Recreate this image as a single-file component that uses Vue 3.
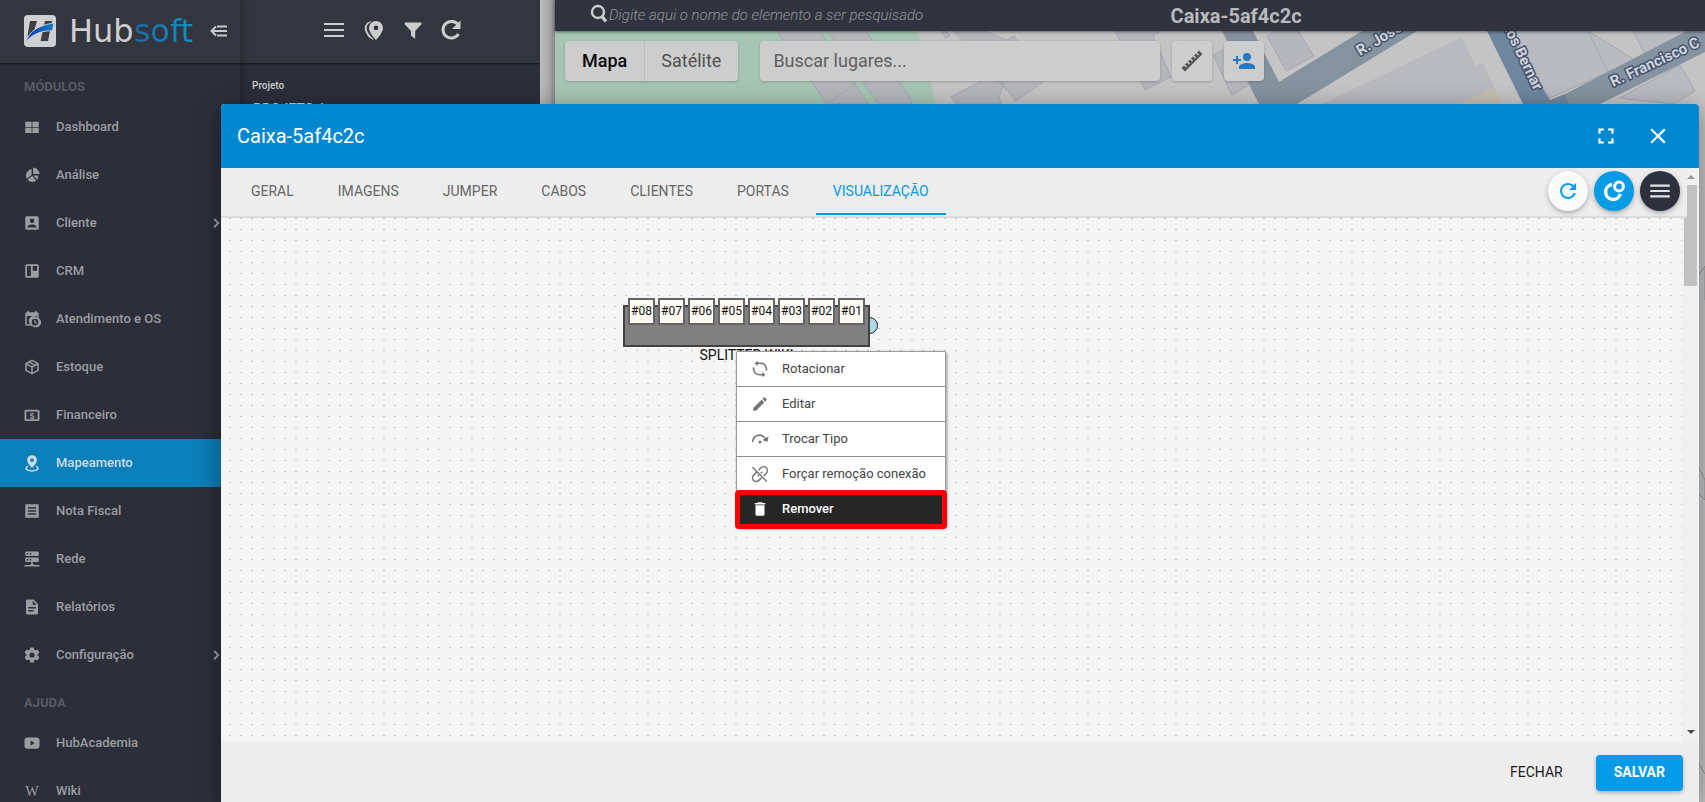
<script setup>
const modules = [
  { label: 'Dashboard', icon: 'grid' },
  { label: 'Análise', icon: 'pie' },
  { label: 'Cliente', icon: 'account', more: true },
  { label: 'CRM', icon: 'board' },
  { label: 'Atendimento e OS', icon: 'calendar' },
  { label: 'Estoque', icon: 'box' },
  { label: 'Financeiro', icon: 'money', glyph: '$' },
  { label: 'Mapeamento', icon: 'pin', active: true },
  { label: 'Nota Fiscal', icon: 'receipt' },
  { label: 'Rede', icon: 'server' },
  { label: 'Relatórios', icon: 'file' },
  { label: 'Configuração', icon: 'cog', more: true },
]
const help = [
  { label: 'HubAcademia', icon: 'video' },
  { label: 'Wiki', icon: 'none', glyph: 'W' },
]
const sections = [
  { title: 'MÓDULOS', items: modules },
  { title: 'AJUDA', items: help },
]
const tabs = ['GERAL', 'IMAGENS', 'JUMPER', 'CABOS', 'CLIENTES', 'PORTAS', 'VISUALIZAÇÃO']
const ports = ['#08', '#07', '#06', '#05', '#04', '#03', '#02', '#01']
const actions = [
  { label: 'Rotacionar', icon: 'rotate' },
  { label: 'Editar', icon: 'pencil' },
  { label: 'Trocar Tipo', icon: 'swap' },
  { label: 'Forçar remoção conexão', icon: 'unlink' },
  { label: 'Remover', icon: 'trash', active: true },
]
const icons = {
  none: '',
  grid: 'M3 5h8.5v7H3zM12.5 5H21v7h-8.5zM3 13h8.5v7H3zM12.5 13H21v7h-8.5z',
  pie: 'M13.5 2A9 9 0 0 1 22 10.500H13.500ZM11.500 4V12L5 17A9 9 0 0 1 11.500 4ZM12.500 13L17.500 19.500A9 9 0 0 1 6 18.200ZM14 12.500H20.500A9 9 0 0 1 18.700 18.400Z',
  account: 'M6,17C6,15 10,13.9 12,13.9C14,13.9 18,15 18,17V18H6M15,9A3,3 0 0,1 12,12A3,3 0 0,1 9,9A3,3 0 0,1 12,6A3,3 0 0,1 15,9M3,5V19A2,2 0 0,0 5,21H19A2,2 0 0,0 21,19V5A2,2 0 0,0 19,3H5C3.89,3 3,3.9 3,5Z',
  board: 'M5 3h14a2 2 0 0 1 2 2v14a2 2 0 0 1-2 2H5a2 2 0 0 1-2-2V5a2 2 0 0 1 2-2zM5.300 5.300v13.400h5.200V5.300zM13 5.300v6.200h5.700V5.300z',
  calendar: 'M6 1h2v2h8V1h2v2h1a2 2 0 0 1 2 2v5.500a6.500 6.500 0 0 1-7.500 11.500A6 6 0 0 1 11 21H5a2 2 0 0 1-2-2V5a2 2 0 0 1 2-2h1zM5 8v11h4.600A6.500 6.500 0 0 1 19 10V8zM16 11.500a4.500 4.500 0 1 0 0 9 4.500 4.500 0 0 0 0-9zM15 13h1.500v2.800l2.300 1.400-.8 1.200-3-1.800z',
  box: 'M21,16.5C21,16.88 20.79,17.21 20.47,17.38L12.57,21.82C12.41,21.94 12.21,22 12,22C11.79,22 11.59,21.94 11.43,21.82L3.53,17.38C3.21,17.21 3,16.88 3,16.5V7.500C3,7.12 3.21,6.79 3.53,6.62L11.43,2.18C11.59,2.06 11.79,2 12,2C12.21,2 12.41,2.06 12.57,2.18L20.47,6.62C20.79,6.79 21,7.12 21,7.5V16.5M12,4.15L10.11,5.22L16,8.61L17.96,7.5L12,4.15M6.04,7.5L12,10.85L13.96,9.75L8.08,6.35L6.04,7.5M5,15.91L11,19.29V12.58L5,9.21V15.91M19,15.91V9.21L13,12.58V19.29L19,15.91Z',
  money: 'M4 5h16a2 2 0 0 1 2 2v11a2 2 0 0 1-2 2H4a2 2 0 0 1-2-2V7a2 2 0 0 1 2-2zM4.500 7.200v10.600h15V7.200z',
  pin: 'M12 1.500A6.500 6.500 0 0 1 18.500 8C18.500 12.500 12 18.500 12 18.500S5.500 12.500 5.500 8A6.500 6.500 0 0 1 12 1.500M12 5.500A2.500 2.500 0 1 0 12 10.500 2.500 2.500 0 0 0 12 5.500M21 19C21 21.500 17 23.500 12 23.500S3 21.500 3 19C3 17.600 4.300 16.300 6.300 15.500L7.300 17C6 17.500 5.200 18.200 5.200 19 5.200 20.400 8.200 21.500 12 21.500S18.800 20.400 18.800 19C18.800 18.200 18 17.500 16.700 17L17.700 15.500C19.700 16.300 21 17.600 21 19Z',
  receipt: 'M3 3h18v18H3zM6.500 7v2h11V7zM6.500 11v2h11v-2zM6.500 15v2h11v-2z',
  server: 'M4 2h16a1 1 0 0 1 1 1v4a1 1 0 0 1-1 1H4a1 1 0 0 1-1-1V3a1 1 0 0 1 1-1zM5 4v2h2V4zM9 4v2h2V4zM4 10h16a1 1 0 0 1 1 1v4a1 1 0 0 1-1 1h-7v3h1l1 1h7v2H2v-2h7l1-1h1v-3H4a1 1 0 0 1-1-1v-4a1 1 0 0 1 1-1zM5 12v2h2v-2zM9 12v2h2v-2z',
  file: 'M5 2h9l6 6v12a2 2 0 0 1-2 2H6a2 2 0 0 1-2-2V4a2 2 0 0 1 1-2zM13 4v5h5zM7 12v2h10v-2zM7 16v2h7v-2z',
  cog: 'M12,15.5A3.5,3.5 0 0,1 8.5,12A3.5,3.5 0 0,1 12,8.5A3.5,3.5 0 0,1 15.5,12A3.5,3.5 0 0,1 12,15.5M19.43,12.97C19.47,12.65 19.5,12.33 19.5,12C19.5,11.67 19.47,11.34 19.43,11L21.54,9.37C21.73,9.22 21.78,8.95 21.66,8.73L19.66,5.27C19.54,5.05 19.27,4.96 19.05,5.05L16.56,6.05C16.04,5.66 15.5,5.32 14.87,5.07L14.5,2.42C14.46,2.18 14.25,2 14,2H10C9.75,2 9.54,2.18 9.5,2.42L9.13,5.07C8.5,5.32 7.96,5.66 7.44,6.05L4.95,5.05C4.73,4.96 4.46,5.05 4.34,5.27L2.34,8.73C2.21,8.95 2.27,9.22 2.46,9.37L4.57,11C4.53,11.34 4.5,11.67 4.5,12C4.5,12.33 4.53,12.65 4.57,12.97L2.46,14.63C2.27,14.78 2.21,15.05 2.34,15.27L4.34,18.73C4.46,18.95 4.73,19.03 4.95,18.95L7.44,17.94C7.96,18.34 8.5,18.68 9.13,18.93L9.5,21.58C9.54,21.82 9.75,22 10,22H14C14.25,22 14.46,21.82 14.5,21.58L14.87,18.93C15.5,18.67 16.04,18.34 16.56,17.94L19.05,18.95C19.27,19.03 19.54,18.95 19.66,18.73L21.66,15.27C21.78,15.05 21.73,14.78 21.54,14.63L19.43,12.97Z',
  video: 'M6 4.500h12a4 4 0 0 1 4 4v7a4 4 0 0 1-4 4H6a4 4 0 0 1-4-4v-7a4 4 0 0 1 4-4zM10 8.500v7l5.500-3.500z',
  chevron: 'M8.600 16.600L13.200 12 8.600 7.400 10.500 5.500l6.500 6.500-6.500 6.500z',
  rotate: 'M9 1L9 3.200H13A9 9 0 0 1 21.500 14H19.300A7 7 0 0 0 13 5.200H9V8L4.800 4.500ZM15 23V20.800H11A9 9 0 0 1 2.500 10H4.700A7 7 0 0 0 11 18.800H15V16L19.200 19.500Z',
  pencil: 'M20.71,7.04C21.1,6.65 21.1,6 20.71,5.63L18.37,3.29C18,2.9 17.35,2.9 16.96,3.29L15.12,5.12L18.87,8.87M3,17.25V21H6.75L17.81,9.93L14.06,6.18L3,17.25Z',
  swap: 'M12 14a2 2 0 1 1 0 4 2 2 0 0 1 0-4M23.500 8.500L22 15.500 15.500 13.500 18 11.800A8 8 0 0 0 3.300 16H1.200A10 10 0 0 1 19.700 10.600Z',
  trash: 'M19,4H15.5L14.5,3H9.5L8.5,4H5V6H19M6,19A2,2 0 0,0 8,21H16A2,2 0 0,0 18,19V7H6V19Z',
  refresh: 'M17.65,6.35C16.2,4.9 14.21,4 12,4A8,8 0 0,0 4,12A8,8 0 0,0 12,20C15.73,20 18.84,17.45 19.73,14H17.65C16.83,16.33 14.61,18 12,18A6,6 0 0,1 6,12A6,6 0 0,1 12,6C13.66,6 15.14,6.69 16.22,7.78L13,11H20V4L17.65,6.35Z',
  menu: 'M3 6H21V8H3zM3 11H21V13H3zM3 16H21V18H3z',
  full: 'M5 5h5v2H7v3H5zM14 5h5v5h-2V7h-3zM17 14h2v5h-5v-2h3zM10 17v2H5v-5h2v3z',
  close: 'M19,6.41L17.59,5L12,10.59L6.41,5L5,6.41L10.59,12L5,17.59L6.41,19L12,13.41L17.59,19L19,17.59L13.41,12L19,6.41Z',
  addPerson: 'M15,14C12.330,14 7,15.330 7,18V20H23V18C23,15.330 17.670,14 15,14M6,10V7H4V10H1V12H4V15H6V12H9V10M15,12A4,4 0 0,0 19,8A4,4 0 0,0 15,4A4,4 0 0,0 11,8A4,4 0 0,0 15,12Z',
  funnel: 'M2 3h20v2l-7.500 8v9.500l-5-4V13L2 5z',
}
</script>

<template>
  <div class="app">
    <aside class="sidebar">
      <header class="brand">
        <svg class="logo" viewBox="0 0 32 32" aria-hidden="true">
          <defs>
            <linearGradient id="swoosh" x1="0" x2="1">
              <stop offset="0" stop-color="#0b36c9" />
              <stop offset="1" stop-color="#0b7fc0" />
            </linearGradient>
          </defs>
          <rect width="32" height="32" rx="4" fill="#cfd0d1" />
          <path d="M6 6h7l-4.500 15H3.500zM21 6h7l-4 20H16.500z" fill="#3e3e40" />
          <path d="M2 26.500C5 18 11 11 30 8L28.500 16C20 15 9 18.500 2 26.500z" fill="url(#swoosh)" stroke="#cfd0d1" />
        </svg>
        <span class="name">Hub<span>soft</span></span>
        <button class="bare fold" aria-label="Recolher menu">
          <svg viewBox="0 0 18 12" width="18" height="12"><path d="M7 1.500H17M2 6H17M7 10.500H17M6 1.500L1.500 6L6 10.500" fill="none" stroke="currentColor" stroke-width="2" /></svg>
        </button>
      </header>
      <nav>
        <template v-for="s in sections" :key="s.title">
          <h2>{{ s.title }}</h2>
          <a v-for="i in s.items" :key="i.label" href="#" class="item" :class="{ active: i.active }">
            <svg viewBox="0 0 24 24" width="18" height="18" aria-hidden="true">
              <path :d="icons[i.icon]" fill="currentColor" fill-rule="evenodd" />
              <text v-if="i.glyph" x="12" :y="i.glyph === 'W' ? 19 : 17" class="glyph" :class="{ serif: i.glyph === 'W' }">{{ i.glyph }}</text>
            </svg>
            <span>{{ i.label }}</span>
            <svg v-if="i.more" class="more" viewBox="0 0 24 24" width="18" height="18"><path :d="icons.chevron" fill="currentColor" /></svg>
          </a>
        </template>
      </nav>
    </aside>

    <section class="project">
      <header>
        <button class="bare" aria-label="Menu"><svg viewBox="0 0 28 28"><path d="M4 8h20M4 14h20M4 20h20" stroke="currentColor" stroke-width="2" /></svg></button>
        <button class="bare" aria-label="Locais"><svg viewBox="0 0 28 28"><path d="M17 5a7 7 0 0 1 7 7c0 5-7 12-7 12s-7-7-7-12a7 7 0 0 1 7-7zM17 9.500a2.400 2.400 0 1 0 0 4.800 2.400 2.400 0 0 0 0-4.800z" fill="currentColor" fill-rule="evenodd" /><path d="M12 5.500C5 8.500 5 15 14 23.500M9.500 6.500C5 10 5 15 11.500 22" fill="none" stroke="currentColor" stroke-width="1.300" /></svg></button>
        <button class="bare" aria-label="Filtrar"><svg viewBox="0 0 28 28"><path :d="icons.funnel" transform="translate(5 4) scale(.84)" fill="currentColor" /></svg></button>
        <button class="bare" aria-label="Atualizar"><svg viewBox="0 0 28 28"><path d="M21.500 9.500A8.300 8.300 0 1 0 21.500 18" fill="none" stroke="currentColor" stroke-width="3" /><path d="M23.500 4.500V13H15z" fill="currentColor" /></svg></button>
      </header>
      <p class="caption">Projeto</p>
      <p class="value">PROJETO 1</p>
    </section>

    <div class="splitbar"></div>

    <main class="map">
      <header>
        <label class="find">
          <svg viewBox="0 0 18 20" width="18" height="20"><circle cx="8" cy="8" r="6" fill="none" stroke="currentColor" stroke-width="2.400" /><path d="M11.500 12L16 17.500" stroke="currentColor" stroke-width="3.400" /></svg>
          <input type="text" placeholder="Digite aqui o nome do elemento a ser pesquisado" aria-label="Pesquisar elemento" />
        </label>
        <h1>Caixa-5af4c2c</h1>
        <span></span>
      </header>
      <div class="ground">
        <svg class="streets" viewBox="555 31 1150 771" width="1150" height="771" aria-hidden="true">
          <rect x="555" y="31" width="1150" height="771" fill="#c4c4c4" />
          <path d="M555 31H918L936 104H555z" fill="#a7c5b4" />
          <g fill="#b5b6bb" stroke="#a5a7b2">
            <path d="M777 31H820L868 104H827zM828 31H866L912 101V104H878zM856 83L827 104" />
            <path d="M941 31L946 38L950 36L947 31M954 31H985L1006 40L1014 36L1044 81L1016 101zM951 97L987 78L1004 83L999 97L1002 104H956z" />
            <path d="M1115 31H1161L1153 35L1171 77L1145 90zM1213 55L1225 49L1252 83L1232 95z" />
            <path d="M1267 36L1276 31H1298L1314 56L1286 71z" />
            <path d="M1322 104L1462 37L1475 66L1483 63L1494 87L1460 104z" fill="#b9babf" stroke="none" />
            <path d="M1507 31H1588L1635 60L1550 98zM1588 31L1608 72M1633 31L1645 54L1705 31zM1620 98L1680 65L1695 91L1673 104z" fill="#b9bbc1" />
          </g>
          <path d="M1460 104L1494 87L1501 104z" fill="#c5bfb0" />
          <path d="M1222 31H1253L1279 82L1362 31H1417L1297 104H1259zM1565 94L1687 31H1705V52L1600 104H1570z" fill="#8593a0" />
          <path d="M1487 31H1507L1550 100L1565 94L1570 104H1523z" fill="#6f869f" />
          <g class="street-names">
            <text transform="translate(1360 56) rotate(-31)">R. José</text>
            <text transform="translate(1613 87) rotate(-25)">R. Francisco C</text>
            <text transform="translate(1498 17) rotate(64)">arlos Bernar</text>
          </g>
          <path d="M1695 280L1705 266V300M1695 460L1705 480V500L1695 490M1698 762L1705 774" fill="none" stroke="#8f929a" />
        </svg>
        <div class="tools">
          <div class="kinds">
            <button class="on">Mapa</button><button>Satélite</button>
          </div>
          <input class="places" type="text" placeholder="Buscar lugares..." aria-label="Buscar lugares" />
          <button class="tool" aria-label="Régua">
            <svg viewBox="0 0 24 24" width="24" height="24"><path d="M1.500 19L4 16.500L6 18.500L7 17.500L5 15.500L7 13.500L9 15.500L10 14.500L8 12.500L10 10.500L12 12.500L13 11.500L11 9.500L13 7.500L15 9.500L16 8.500L14 6.500L16 4.500L18 6.500L19 5.500L17 3.500L19 1.500L22.500 5L5 22.500z" fill="#555" /></svg>
          </button>
          <button class="tool person" aria-label="Adicionar cliente">
            <svg viewBox="0 0 24 24" width="24" height="24"><path :d="icons.addPerson" fill="#2378c3" /></svg>
          </button>
        </div>
      </div>
    </main>

    <section class="dialog" role="dialog" aria-labelledby="dialog-title">
      <header class="title">
        <h2 id="dialog-title">Caixa-5af4c2c</h2>
        <button class="bare" aria-label="Tela cheia"><svg viewBox="0 0 24 24" width="26" height="26"><path :d="icons.full" fill="currentColor" /></svg></button>
        <button class="bare" aria-label="Fechar janela"><svg viewBox="0 0 24 24" width="26" height="26"><path :d="icons.close" fill="currentColor" /></svg></button>
      </header>
      <div class="body">
        <div class="content">
          <div class="tabbar">
            <div class="tabs" role="tablist">
              <button v-for="(t, n) in tabs" :key="t" role="tab" :aria-selected="n === 6">{{ t }}</button>
            </div>
            <div class="rounds">
              <button class="round light" aria-label="Recarregar"><svg viewBox="0 0 24 24" width="24" height="24"><path :d="icons.refresh" fill="#0a9df0" /></svg></button>
              <button class="round blue" aria-label="Conectar"><svg viewBox="0 0 24 24" width="24" height="24"><circle cx="17" cy="7.500" r="4.400" fill="none" stroke="#fff" stroke-width="3" /><path d="M10 5.500A7.500 7.500 0 1 0 18.300 15" fill="none" stroke="#fff" stroke-width="3.400" /></svg></button>
              <button class="round dark" aria-label="Opções"><svg viewBox="0 0 24 24" width="26" height="26"><path :d="icons.menu" fill="#e4e4e6" /></svg></button>
            </div>
          </div>
          <div class="canvas">
            <div class="device">
              <i class="plug"></i>
              <div class="case"></div>
              <div class="ports"><span v-for="p in ports" :key="p">{{ p }}</span></div>
              <p>SPLITTER WIKI</p>
            </div>
            <div class="menu" role="menu">
              <button v-for="a in actions" :key="a.label" role="menuitem" :class="{ active: a.active }">
                <svg viewBox="0 0 24 24" width="18" height="18" aria-hidden="true">
                  <g v-if="a.icon === 'unlink'" fill="none" stroke="currentColor" stroke-width="2"><path d="M2 3L21 22M10 7L13 4A4.600 4.600 0 0 1 20.500 11L17 14.500M7.500 9.500L3.500 13.500A4.600 4.600 0 0 0 10.500 20.500L14 17M15 9L13 11M9 15L10.500 13.500" /></g>
                  <path v-else :d="icons[a.icon]" fill="currentColor" />
                </svg>
                <span>{{ a.label }}</span>
              </button>
            </div>
          </div>
        </div>
        <div class="scroll" aria-hidden="true">
          <i class="up"></i><i class="thumb"></i><i class="down"></i>
        </div>
      </div>
      <footer>
        <button class="dismiss">FECHAR</button>
        <button class="save">SALVAR</button>
      </footer>
    </section>
  </div>
</template>

<style>
body { margin: 0; }
</style>

<style scoped>
* { box-sizing: border-box; }
.app { display: flex; height: 100vh; overflow: hidden; position: relative; font-family: Roboto, "Liberation Sans", sans-serif; background: #2c2e3a; }
h1, h2, p { margin: 0; }
button, input { font-family: inherit; }
button { border: 0; padding: 0; cursor: pointer; }
.bare { background: none; color: inherit; display: flex; align-items: center; justify-content: center; }
svg { display: block; flex: none; }

.sidebar { width: 240px; flex: none; background: #2c2e3a; color: #9c9da1; box-shadow: 0 0 10px rgba(0, 0, 0, .4); z-index: 1; overflow: hidden; }
.brand { height: 63px; display: flex; align-items: center; padding: 0 12px 2px 24px; background: #33363f; box-shadow: 0 1px 2px rgba(0, 0, 0, .6); position: relative; }
.logo { width: 32px; height: 32px; }
.name { margin-left: 13px; font-family: "DejaVu Sans", sans-serif; font-size: 32px; line-height: 32px; color: #cfcfcf; }
.name span { background: linear-gradient(90deg, #1f69a6, #0b93c8); background-clip: text; color: transparent; }
.fold { margin-left: auto; color: #c8c8ca; }
nav h2 { height: 40px; padding: 16px 24px 0; font-size: 13px; line-height: 16px; font-weight: 700; color: #595b63; }
.item { height: 48px; display: flex; align-items: center; padding: 0 15px 0 23px; color: inherit; font-size: 13px; line-height: 16px; font-weight: 500; text-decoration: none; }
.item span { margin-left: 15px; flex: 1; }
.item.active { background: #0b7fb9; color: #ccdbe4; }
.glyph { font: bold 11px "Liberation Sans", sans-serif; fill: currentColor; text-anchor: middle; }
.glyph.serif { font: 19px "Liberation Serif", serif; }

.project { width: 300px; flex: none; color: #cdcdcd; }
.project header { height: 63px; display: flex; align-items: center; justify-content: center; gap: 11px; padding-bottom: 4px; padding-left: 4px; background: #33363f; box-shadow: 0 1px 2px rgba(0, 0, 0, .6); }
.project header button, .project header svg { width: 28px; height: 28px; }
.caption { padding: 16px 12px 0; font-size: 10px; line-height: 14px; font-weight: 500; }
.value { padding: 8px 13px 0; font-size: 14px; line-height: 16px; font-weight: 500; }
.splitbar { width: 15px; flex: none; background: linear-gradient(90deg, #bdbdbd, #a8a8a8 60%, #858585); }

.map { flex: 1; min-width: 0; display: flex; flex-direction: column; }
.map > header { height: 31px; flex: none; display: grid; grid-template-columns: 59fr auto 41fr; align-items: center; padding-left: 35px; background: #31343f; box-shadow: 0 1px 3px rgba(0, 0, 0, .5); z-index: 1; }
.find { display: flex; align-items: center; gap: 1px; color: #cdcdcd; margin-top: -4px; }
.find input { width: 340px; border: 0; padding: 3px 0 0; background: none; color: #9a9ba0; font-size: 15px; font-style: italic; font-weight: 300; }
.find input::placeholder { color: #94959b; opacity: 1; }
.map h1 { font-size: 20px; line-height: 28px; font-weight: 700; color: #b9babd; }
.ground { flex: 1; position: relative; overflow: hidden; background: #c4c4c4; }
.streets { position: absolute; left: 0; top: 0; }
.street-names { font: 700 15px Roboto, sans-serif; fill: #d0d2d6; stroke: #455472; stroke-width: 3px; paint-order: stroke; stroke-linejoin: round; }
.tools { position: relative; display: flex; padding: 10px; }
.kinds, .places, .tool { height: 40px; background: #cdcdcd; border-radius: 4px; box-shadow: 0 1px 3px rgba(0, 0, 0, .2); border: 0; }
.kinds { display: flex; margin-right: 22px; overflow: hidden; }
.kinds button { background: none; padding: 0 17px 2px; font-size: 18px; color: #505050; }
.kinds button:last-child { padding-left: 16px; }
.kinds .on { font-weight: 500; color: #0a0a0a; border-right: 1px solid #bcbcbc; }
.places { width: 400px; padding: 0 13px 2px; font-size: 18px; color: #555; margin-right: 12px; }
.places::placeholder { color: #606060; opacity: 1; }
.tool { width: 40px; display: flex; align-items: center; justify-content: center; margin-right: 12px; }

.dialog { position: absolute; left: 221px; right: 6px; top: 104px; bottom: 0; z-index: 3; display: flex; flex-direction: column; border-radius: 4px 4px 0 0; overflow: hidden; background: #ededed; }
.app::after { content: ""; position: absolute; left: 221px; right: 6px; top: 104px; bottom: 0; box-shadow: 0 6px 24px rgba(0, 0, 0, .4); z-index: 2; pointer-events: none; }
.title { height: 64px; flex: none; display: flex; align-items: center; padding: 0 28px 0 16px; gap: 26px; background: #0288d1; color: #fff; }
.title h2 { flex: 1; font-size: 20px; line-height: 24px; font-weight: 400; }
.body { flex: 1; min-height: 0; display: flex; }
.content { flex: 1; min-width: 0; display: flex; flex-direction: column; }
.tabbar { height: 50px; flex: none; display: flex; margin-right: -5px; background: #ededed; border-bottom: 2px solid #dcdcdc; position: relative; z-index: 2; justify-content: space-between; }
.tabs { display: flex; gap: 10px; padding-left: 13px; height: 47px; }
.tabs button { background: none; padding: 0 17px; font-size: 14px; color: #666; border-bottom: 2px solid transparent; }
.tabs button[aria-selected="true"] { color: #039be5; border-color: #039be5; }
.rounds { display: flex; gap: 6px; padding: 3px 7px 0 0; }
.round { width: 40px; height: 40px; border-radius: 50%; display: flex; align-items: center; justify-content: center; box-shadow: 0 2px 5px rgba(0, 0, 0, .3); }
.light { background: #fafafa; }
.blue { background: #059be5; }
.dark { background: #2d303d; }
.canvas { flex: 1; position: relative; overflow: hidden; background: #f5f5f5 radial-gradient(circle at 9px 0, #c2c2c2 0, #c2c2c2 1px, transparent 1px) 0 0 / 11px 11px; }
.device { position: absolute; left: 402px; top: 80px; width: 247px; }
.case { height: 42px; margin-top: 7px; background: #808080; border: 2px solid #424242; position: relative; }
.plug { position: absolute; left: 238px; top: 19px; width: 17px; height: 17px; border: 1px solid #222; border-radius: 50%; background: #add8e6; }
.ports { position: absolute; left: 5px; top: 0; display: flex; gap: 3px; }
.ports span { width: 27px; height: 27px; border: 2px solid #646464; background: #fffaf3; font-size: 12px; line-height: 22px; text-align: center; color: #111; }
.device p { text-align: center; font-size: 14px; line-height: 16px; color: #111; }
.menu { position: absolute; left: 515px; top: 133px; width: 210px; background: #fff; border: 1px solid #9a9a9a; border-radius: 2px; box-shadow: 1px 1px 3px rgba(0, 0, 0, .4); }
.menu button { width: 100%; height: 35px; display: flex; align-items: center; gap: 13px; padding: 0 0 1px 14px; background: #fff; border-bottom: 1px solid #8e8e8e; font-size: 13px; color: #444; }
.menu span { padding-bottom: 1px; }
.menu svg { color: #757575; }
.menu .active { background: #262626; color: #fff; font-weight: 500; border: 0; outline: 5px solid #f00; outline-offset: -3px; border-radius: 2px; }
.menu .active svg { color: #fff; }
.scroll { width: 17px; flex: none; background: #f0f0f0; display: flex; flex-direction: column; align-items: center; padding: 7px 0; }
.up { border: 4px solid transparent; border-top: 0; border-bottom-color: #999; margin-left: 1px; }
.thumb { width: 13px; height: 101px; margin-top: 6px; background: #c1c1c1; }
.down { margin-top: auto; border: 4px solid transparent; border-bottom: 0; border-top-color: #444; margin-left: 1px; }
.dialog footer { height: 61px; flex: none; display: flex; justify-content: flex-end; align-items: center; gap: 17px; padding: 2px 16px 0; }
.dialog footer button { height: 36px; padding: 0 18px 2px; font-size: 14px; }
.dialog footer .dismiss { padding: 0 16px 2px; background: none; color: #1a1a1a; }
.dialog footer .save { background: #069be8; color: #fff; font-weight: 700; border-radius: 4px; box-shadow: 0 2px 4px rgba(0, 0, 0, .25); }
</style>
